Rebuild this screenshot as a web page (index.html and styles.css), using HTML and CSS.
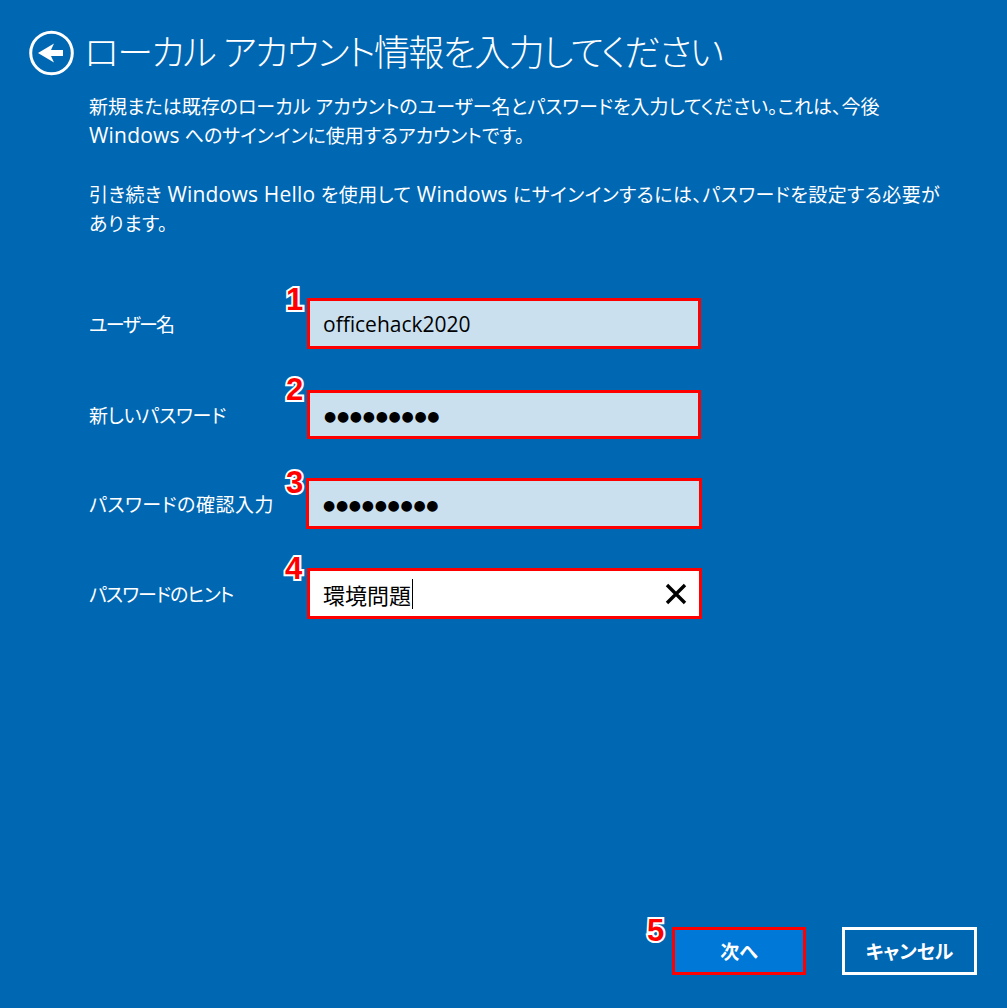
FILE: index.html
```html
<!DOCTYPE html>
<html lang="ja">

<head>
    <meta charset="UTF-8" />
    <meta name="viewport" content="width=device-width, initial-scale=1.0" />
    <title>ローカル アカウント情報を入力してください</title>
    <link rel="stylesheet" href="styles.css">
</head>

<body>
    <div class="page">
        <div class="header">
            <svg class="back-icon" viewBox="0 0 46 46" width="46" height="46">
                <circle cx="22.5" cy="23" r="20.8" fill="none" stroke="#fff" stroke-width="3" />
                <path d="M34 20H22l3-6.5L9 23l16 9.5-3-6.5h12z" fill="#fff" />
            </svg>
            <h1>ローカル アカウント情報を入力してください</h1>
        </div>

        <div class="desc">
            <p>新規または既存のローカル アカウントのユーザー名とパスワードを入力してください。これは、今後<br><span class="latin">Windows</span> へのサインインに使用するアカウントです。</p>
            <p class="desc-wide">引き続き <span class="latin">Windows Hello</span> を使用して <span class="latin">Windows</span> にサインインするには、パスワードを設定する必要が<br>あります。</p>
        </div>

        <div class="form">
            <div class="row row-1">
                <label>ユーザー名</label>
                <div class="field">
                    <span class="badge">1</span>
                    <span class="value">officehack2020</span>
                </div>
            </div>
            <div class="row row-2">
                <label>新しいパスワード</label>
                <div class="field">
                    <span class="badge">2</span>
                    <span class="dots">●●●●●●●●●</span>
                </div>
            </div>
            <div class="row row-3">
                <label>パスワードの確認入力</label>
                <div class="field">
                    <span class="badge">3</span>
                    <span class="dots">●●●●●●●●●</span>
                </div>
            </div>
            <div class="row row-4">
                <label>パスワードのヒント</label>
                <div class="field field-active">
                    <span class="badge">4</span>
                    <span class="value value-hint">環境問題</span>
                    <span class="caret"></span>
                    <svg class="clear-icon" viewBox="0 0 22 22" width="22" height="22">
                        <path d="M2 2l18 18M20 2L2 20" stroke="#000" stroke-width="3.4" fill="none" />
                    </svg>
                </div>
            </div>
        </div>

        <div class="footer">
            <button class="btn btn-next"><span class="badge badge-next">5</span>次へ</button>
            <button class="btn btn-cancel">キャンセル</button>
        </div>
    </div>
</body>

</html>
```

FILE: styles.css
```css
html,
body {
    margin: 0;
    height: 100%;
}

body {
    font-family: "Open Sans", "Noto Sans CJK JP", sans-serif;
    font-feature-settings: "palt";
    background-color: #0067b3;
    color: #fff;
    overflow: hidden;
}

.page {
    height: 1008px;
    box-sizing: border-box;
    padding: 30px 30px 33px 29px;
    display: flex;
    flex-direction: column;
}

.header {
    display: flex;
    align-items: center;
    gap: 9px;
}

.back-icon {
    flex-shrink: 0;
}

h1 {
    margin: 0;
    font-size: 36px;
    font-weight: 300;
    line-height: 46px;
    letter-spacing: -1.6px;
}

.desc {
    margin: 17px 0 0 60px;
    font-size: 19px;
    line-height: 29px;
}

.desc p {
    margin: 0 0 30px;
}

.desc .desc-wide {
    letter-spacing: 0.45px;
}

.latin {
    font-size: 21px;
    line-height: 1;
    letter-spacing: 0.2px;
}

.form {
    margin-top: 29px;
}

.row {
    display: flex;
    align-items: center;
    margin-left: 60px;
}

.row label {
    width: 218px;
    font-size: 19px;
}

.row-1 label {
    letter-spacing: -1.7px;
}

.row-2 label {
    letter-spacing: -0.2px;
}

.row-3 label {
    letter-spacing: 0.5px;
}

.row-4 label {
    letter-spacing: -0.9px;
}

.row-2 {
    margin-top: 41px;
}

.row-3 {
    margin-top: 39px;
}

.row-4 {
    margin-top: 39px;
}

.field {
    position: relative;
    box-sizing: border-box;
    width: 394px;
    height: 51px;
    border: 3px solid #f00;
    background-color: #cae0ef;
    color: #000;
    display: flex;
    align-items: center;
    padding-left: 13px;
    font-size: 21px;
}

.row-2 .field {
    height: 49px;
}

.row-3 .field {
    width: 396px;
    margin-left: -1px;
}

.field-active {
    background-color: #fff;
    width: 395px;
}

.value-hint {
    font-size: 22px;
}

.dots {
    font-family: "DejaVu Sans", sans-serif;
    font-size: 14px;
    letter-spacing: 0.7px;
    padding: 3px 0 0 1px;
}

.caret {
    width: 1px;
    height: 30px;
    background-color: #000;
    margin-left: 1px;
}

.clear-icon {
    position: absolute;
    right: 12px;
    top: 12px;
}

.badge {
    position: absolute;
    left: -24px;
    top: -19px;
    font-family: "Liberation Sans", sans-serif;
    font-size: 31px;
    font-weight: bold;
    line-height: 36px;
    color: #f00;
    -webkit-text-stroke: 4px #fff;
    paint-order: stroke fill;
}

.row-2 .badge {
    top: -21px;
}

.row-3 .badge {
    left: -23px;
    top: -16px;
}

.row-4 .badge {
    left: -25px;
    top: -20px;
}

.footer {
    margin-top: auto;
    display: flex;
    justify-content: flex-end;
    gap: 36px;
}

.btn {
    position: relative;
    box-sizing: border-box;
    width: 134px;
    height: 48px;
    font-family: inherit;
    font-feature-settings: "palt";
    font-size: 19px;
    font-weight: bold;
    color: #fff;
    padding: 0;
}

.btn-next {
    background-color: #0078d7;
    border: 3px solid #f00;
}

.btn-cancel {
    background-color: transparent;
    border: 3px solid #fff;
    width: 135px;
}

.badge-next {
    left: -28px;
    top: -17px;
}
```
